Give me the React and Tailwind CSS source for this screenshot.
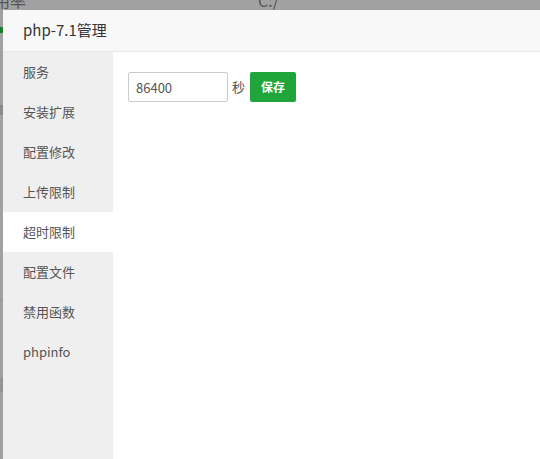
import React from "react";

const items = ["服务", "安装扩展", "配置修改", "上传限制", "超时限制", "配置文件", "禁用函数", "phpinfo"];

export default function App() {
  return (
    <div
      className="relative w-[540px] h-[459px] overflow-hidden bg-[#a1a1a1]"
      style={{ fontFamily: '"Noto Sans CJK SC", "Noto Sans", sans-serif' }}
    >
      <div className="absolute left-[-6px] top-[-10px] text-[16px] leading-[20px] text-[#555]">用率</div>
      <div className="absolute left-[258px] top-[-10px] text-[16px] leading-[20px] text-[#555]">C:/</div>
      <div className="absolute left-0 top-[27px] w-[3px] h-[6px] bg-[#1f7a2e]"></div>
      <div className="absolute left-0 top-[105px] w-[3px] h-[10px] bg-[#8a8a8a]"></div>
      <div className="absolute left-0 top-[300px] w-[3px] h-[1px] bg-[#8f8f8f]"></div>
      <div className="absolute left-0 top-[377px] w-[3px] h-[15px] bg-[#959595]"></div>

      <div className="absolute left-[3px] top-[10px] right-0 bottom-0 flex flex-col bg-white">
        <div className="h-[42px] shrink-0 flex items-center pl-[20px] bg-[#f8f8f8] border-b border-[#e8e8e8] text-[15px] text-[#333]">
          php-7.1管理
        </div>
        <div className="flex flex-1">
          <div className="w-[110px] bg-[#efefef] flex flex-col">
            {items.map((t, i) => (
              <div
                key={t}
                className={
                  "h-[40px] flex items-center pl-[20px] text-[13px] text-[#555] " +
                  (i === 4 ? "bg-white" : "")
                }
              >
                {t}
              </div>
            ))}
          </div>
          <div className="flex-1 pl-[15px] pt-[20px]">
            <div className="flex items-center">
              <input
                defaultValue="86400"
                className="w-[100px] h-[30px] border border-[#ccc] rounded-[2px] px-[7px] text-[13px] text-[#555] outline-none bg-white"
                style={{ fontFamily: '"Noto Sans CJK SC", sans-serif' }}
              />
              <span className="ml-[4px] text-[13px] text-[#555]">秒</span>
              <button
                className="ml-[5px] w-[46px] h-[30px] rounded-[2px] bg-[#20a53a] text-white text-[12px] font-bold"
                style={{ fontFamily: '"Noto Sans CJK SC", sans-serif' }}
              >
                保存
              </button>
            </div>
          </div>
        </div>
      </div>
    </div>
  );
}
